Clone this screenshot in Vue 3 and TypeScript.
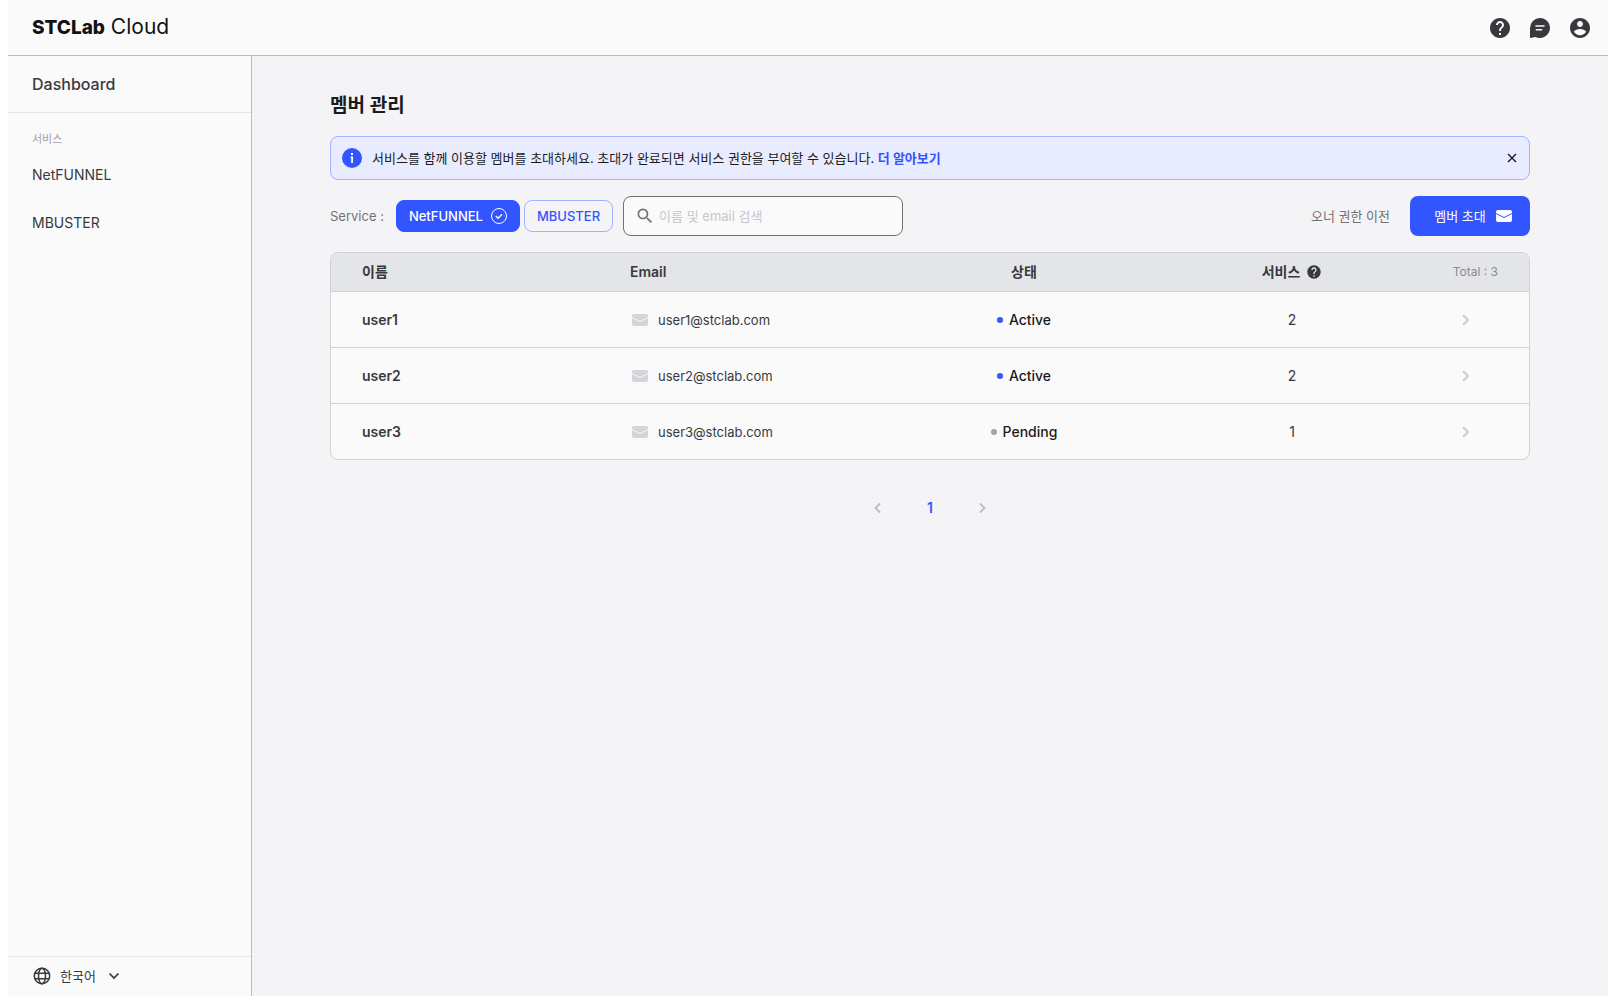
<script setup lang="ts">
import { computed, ref } from 'vue'

interface Member {
  name: string
  email: string
  status: 'Active' | 'Pending'
  services: number
}

const navItems: string[] = ['NetFUNNEL', 'MBUSTER']
const services: string[] = ['NetFUNNEL', 'MBUSTER']
const selected = ref<string>('NetFUNNEL')
const query = ref('')
const bannerOpen = ref(true)
const language = ref('ko')

const members: Member[] = [
  { name: 'user1', email: 'user1@stclab.com', status: 'Active', services: 2 },
  { name: 'user2', email: 'user2@stclab.com', status: 'Active', services: 2 },
  { name: 'user3', email: 'user3@stclab.com', status: 'Pending', services: 1 },
]

const visibleMembers = computed(() =>
  members.filter((m) => m.name.includes(query.value) || m.email.includes(query.value)),
)

const helpPath =
  'M12 2C6.48 2 2 6.48 2 12s4.48 10 10 10 10-4.48 10-10S17.52 2 12 2zm1 17h-2v-2h2v2zm2.07-7.75l-.9.92C13.45 12.9 13 13.5 13 15h-2v-.5c0-1.1.45-2.1 1.17-2.83l1.24-1.26c.37-.36.59-.86.59-1.41 0-1.1-.9-2-2-2s-2 .9-2 2H8c0-2.21 1.79-4 4-4s4 1.79 4 4c0 .88-.36 1.68-.93 2.25z'
const mailPath =
  'M2 0h12a2 2 0 0 1 2 2v.9L8 6.9 0 2.9V2a2 2 0 0 1 2-2zM0 4.1l8 4 8-4V10a2 2 0 0 1-2 2H2a2 2 0 0 1-2-2z'
</script>

<template>
  <div class="app">
    <header class="topbar">
      <a class="logo" href="#"><strong>STCLab</strong> Cloud</a>
      <div class="actions">
        <button type="button" aria-label="도움말">
          <svg width="24" height="24" viewBox="0 0 24 24"><path :d="helpPath" /></svg>
        </button>
        <button type="button" aria-label="문의">
          <svg width="24" height="24" viewBox="0 0 24 24">
            <path
              fill-rule="evenodd"
              d="M12 2a10 10 0 1 1-4.6 18.9L2 22V12A10 10 0 0 1 12 2zM8 9.2a.8.8 0 0 0 0 1.6h8a.8.8 0 0 0 0-1.6zM8.4 13a.8.8 0 0 0 0 1.6h5.2a.8.8 0 0 0 0-1.6z"
            />
          </svg>
        </button>
        <button type="button" aria-label="계정">
          <svg width="24" height="24" viewBox="0 0 24 24">
            <path
              d="M12 2C6.48 2 2 6.48 2 12s4.48 10 10 10 10-4.48 10-10S17.52 2 12 2zm0 3c1.66 0 3 1.34 3 3s-1.34 3-3 3-3-1.34-3-3 1.34-3 3-3zm0 14.2c-2.5 0-4.71-1.28-6-3.22.03-1.99 4-3.08 6-3.08 1.99 0 5.97 1.09 6 3.08-1.29 1.94-3.5 3.22-6 3.22z"
            />
          </svg>
        </button>
      </div>
    </header>

    <div class="body">
      <aside class="sidebar">
        <a class="dashboard" href="#">Dashboard</a>
        <nav class="nav">
          <p class="nav-label">서비스</p>
          <a v-for="item in navItems" :key="item" href="#">{{ item }}</a>
        </nav>
        <label class="language" aria-label="언어">
          <svg width="20" height="20" viewBox="0 0 20 20" fill="none" stroke="currentColor" stroke-width="1.5">
            <circle cx="10" cy="10" r="7.7" />
            <ellipse cx="10" cy="10" rx="3.5" ry="7.7" />
            <path d="M2.8 7.3h14.4M2.8 12.7h14.4" />
          </svg>
          <select v-model="language">
            <option value="ko">한국어</option>
          </select>
          <svg width="12" height="12" viewBox="0 0 12 12" fill="none" stroke="currentColor" stroke-width="1.7">
            <path d="M1.5 3.5 6 8l4.5-4.5" />
          </svg>
        </label>
      </aside>

      <main class="main">
        <div class="content">
          <h1>멤버 관리</h1>

          <section v-if="bannerOpen" class="banner">
            <svg width="20" height="20" viewBox="0 0 20 20">
              <circle cx="10" cy="10" r="10" fill="#3355ff" />
              <path d="M9 5h2v2H9zM8.5 8.5H11V15H9.2V9.7h-.7z" fill="#fff" />
            </svg>
            <p>
              서비스를 함께 이용할 멤버를 초대하세요. 초대가 완료되면 서비스 권한을 부여할 수 있습니다.
              <a href="#">더 알아보기</a>
            </p>
            <button type="button" aria-label="닫기" @click="bannerOpen = false">
              <svg width="10" height="10" viewBox="0 0 10 10" fill="none" stroke="currentColor" stroke-width="1.4">
                <path d="m1 1 8 8M9 1 1 9" />
              </svg>
            </button>
          </section>

          <div class="toolbar">
            <span class="toolbar-label">Service :</span>
            <div class="chips">
              <button
                v-for="s in services"
                :key="s"
                type="button"
                class="chip"
                :class="{ on: s === selected }"
                :aria-pressed="s === selected"
                @click="selected = s"
              >
                {{ s }}
                <svg v-if="s === selected" width="16" height="16" viewBox="0 0 16 16" fill="none" stroke="currentColor">
                  <circle cx="8" cy="8" r="7.5" />
                  <path d="m4.8 8 2.3 2.3 4-4" stroke-width="1.3" />
                </svg>
              </button>
            </div>
            <label class="search" aria-label="멤버 검색">
              <svg width="20" height="20" viewBox="0 0 24 24">
                <path
                  d="M15.5 14h-.79l-.28-.27A6.471 6.471 0 0 0 16 9.5 6.5 6.5 0 1 0 9.5 16c1.61 0 3.09-.59 4.23-1.57l.27.28v.79l5 4.99L20.49 19l-4.99-5zm-6 0C7.01 14 5 11.99 5 9.5S7.01 5 9.5 5 14 7.01 14 9.5 11.99 14 9.5 14z"
                />
              </svg>
              <input v-model="query" type="text" placeholder="이름 및 email 검색" />
            </label>
            <button type="button" class="transfer">오너 권한 이전</button>
            <button type="button" class="invite">
              멤버 초대
              <svg width="16" height="12" viewBox="0 0 16 12"><path :d="mailPath" /></svg>
            </button>
          </div>

          <div class="table-frame">
            <table>
              <colgroup>
                <col class="col-name" />
                <col />
                <col class="col-mid" />
                <col class="col-mid" />
                <col class="col-end" />
              </colgroup>
              <thead>
                <tr>
                  <th class="name">이름</th>
                  <th>Email</th>
                  <th class="center">상태</th>
                  <th>
                    <div class="service-head">
                      서비스
                      <svg width="16" height="16" viewBox="0 0 24 24"><path :d="helpPath" /></svg>
                    </div>
                  </th>
                  <th class="total">Total : {{ members.length }}</th>
                </tr>
              </thead>
              <tbody>
                <tr v-for="m in visibleMembers" :key="m.email">
                  <td class="name">{{ m.name }}</td>
                  <td>
                    <div class="email">
                      <svg width="16" height="12" viewBox="0 0 16 12"><path :d="mailPath" /></svg>
                      {{ m.email }}
                    </div>
                  </td>
                  <td>
                    <div class="status" :class="{ active: m.status === 'Active' }">{{ m.status }}</div>
                  </td>
                  <td class="center">{{ m.services }}</td>
                  <td class="more">
                    <button type="button" :aria-label="m.name + ' 상세'">
                      <svg width="12" height="12" viewBox="0 0 12 12" fill="none" stroke="currentColor" stroke-width="1.8">
                        <path d="m3 1 5 5-5 5" />
                      </svg>
                    </button>
                  </td>
                </tr>
              </tbody>
            </table>
          </div>

          <nav class="pager" aria-label="페이지">
            <button type="button" aria-label="이전">
              <svg width="12" height="12" viewBox="0 0 12 12" fill="none" stroke="currentColor" stroke-width="1.8">
                <path d="M8 1.5 3.5 6 8 10.5" />
              </svg>
            </button>
            <button type="button" class="current" aria-current="page">1</button>
            <button type="button" aria-label="다음">
              <svg width="12" height="12" viewBox="0 0 12 12" fill="none" stroke="currentColor" stroke-width="1.8">
                <path d="M4 1.5 8.5 6 4 10.5" />
              </svg>
            </button>
          </nav>
        </div>
      </main>
    </div>
  </div>
</template>

<style>
body {
  background: #fff;
}
</style>

<style scoped>
.app {
  display: flex;
  flex-direction: column;
  box-sizing: border-box;
  min-height: 100vh;
  padding: 0 0 12px 8px;
  font-family: Inter, 'Noto Sans CJK KR', sans-serif;
  font-size: 13px;
  line-height: 20px;
  color: #38393e;
}
.app * {
  box-sizing: border-box;
}
svg {
  display: block;
  flex: none;
}
svg:not([fill]) {
  fill: currentColor;
}
a {
  color: inherit;
  text-decoration: none;
}
button,
input,
select {
  margin: 0;
  padding: 0;
  border: 0;
  background: none;
  font: inherit;
  color: inherit;
}
button {
  cursor: pointer;
}
.topbar {
  display: flex;
  align-items: center;
  justify-content: space-between;
  height: 56px;
  padding: 0 16px 0 24px;
  background: #fafafa;
  border-bottom: 1px solid #bcbdc2;
}
.logo {
  font-size: 21px;
  line-height: 28px;
  color: #121314;
}
.logo strong {
  font-size: 19px;
  font-weight: 800;
}
.actions {
  display: flex;
  gap: 16px;
}
.body {
  display: flex;
  flex: 1;
}
.sidebar {
  display: flex;
  flex-direction: column;
  flex: none;
  width: 244px;
  background: #fafafa;
  border-right: 1px solid #bcbdc2;
}
.dashboard {
  padding: 18px 24px;
  border-bottom: 1px solid #e2e3ea;
  font-size: 16px;
  font-weight: 500;
}
.nav {
  display: flex;
  flex: 1;
  flex-direction: column;
  padding: 16px 24px;
}
.nav-label {
  margin: 0;
  font-size: 11px;
  color: #a2a3a8;
}
.nav a {
  padding: 14px 0;
  font-size: 14px;
}
.nav-label + a {
  padding-top: 16px;
}
.language {
  display: flex;
  align-items: center;
  height: 40px;
  padding: 0 24px 2px;
  border-top: 1px solid #e2e3ea;
}
.language select {
  margin: 0 12px 0 8px;
  appearance: none;
}
.main {
  flex: 1;
  min-width: 0;
  padding: 32px 24px;
  background: #f4f4f7;
}
.content {
  max-width: 1200px;
  margin: 0 auto;
}
h1 {
  margin: 0;
  padding: 2px 0 14px;
  font-size: 19px;
  line-height: 32px;
  font-weight: 600;
  color: #1a1b1d;
}
.banner {
  display: flex;
  align-items: center;
  gap: 10px;
  height: 44px;
  margin-bottom: 16px;
  padding: 0 11px;
  background: #e9ecfe;
  border: 1px solid #a3b3ff;
  border-radius: 8px;
  color: #1a1b1d;
}
.banner p {
  flex: 1;
  margin: 0;
}
.banner a {
  color: #3355ff;
  font-weight: 700;
}
.banner button {
  padding: 1px;
}
.toolbar {
  display: flex;
  align-items: center;
  margin-bottom: 16px;
}
.toolbar-label {
  margin-right: 12px;
  color: #717277;
}
.chips {
  display: flex;
  gap: 4px;
  margin-right: 10px;
}
.chip {
  display: flex;
  align-items: center;
  gap: 8px;
  height: 32px;
  padding: 0 12px;
  border: 1px solid #a3b3ff;
  border-radius: 8px;
  font-weight: 500;
  color: #3355ff;
}
.chip.on {
  border-color: #3355ff;
  background: #3355ff;
  color: #fff;
}
.search {
  display: flex;
  align-items: center;
  gap: 4px;
  width: 280px;
  height: 40px;
  padding: 0 11px;
  background: #fafafa;
  border: 1px solid #717277;
  border-radius: 8px;
  color: #717277;
}
.search input {
  flex: 1;
  min-width: 0;
  outline: 0;
}
.search input::placeholder {
  color: #c6c7cc;
  opacity: 1;
}
.transfer {
  margin-left: auto;
  margin-right: 20px;
  color: #717277;
}
.invite {
  display: flex;
  align-items: center;
  justify-content: center;
  gap: 10px;
  width: 120px;
  height: 40px;
  padding-left: 6px;
  background: #3355ff;
  border-radius: 8px;
  color: #fff;
}
.table-frame {
  overflow: hidden;
  background: #fafafa;
  border: 1px solid #d1d2d6;
  border-radius: 8px;
}
table {
  width: 100%;
  border-spacing: 0;
  table-layout: fixed;
  font-size: 14px;
}
.col-name {
  width: 299px;
}
.col-mid {
  width: 268px;
}
.col-end {
  width: 103px;
}
th {
  height: 38px;
  padding: 0;
  background: #e4e5e9;
  font-weight: 600;
  text-align: left;
}
td {
  height: 56px;
  padding: 0;
  border-top: 1px solid #d1d2d6;
}
.name {
  padding-left: 31px;
  font-weight: 600;
}
.center {
  text-align: center;
}
.service-head {
  display: flex;
  align-items: center;
  justify-content: center;
  gap: 6px;
}
.total {
  padding-right: 31px;
  font-size: 12px;
  font-weight: 400;
  text-align: right;
  color: #8a8b90;
}
.email {
  display: flex;
  align-items: center;
  gap: 10px;
  padding-left: 2px;
  font-size: 13px;
}
.email svg {
  color: #d3d4da;
}
.status {
  display: flex;
  align-items: center;
  justify-content: center;
  gap: 6px;
  font-weight: 500;
  color: #1a1b1d;
}
.status::before {
  content: '';
  width: 6px;
  height: 6px;
  border-radius: 50%;
  background: #a2a3a8;
}
.status.active::before {
  background: #3355ff;
}
.more {
  padding-left: 34px;
  color: #c9cacf;
}
.more button {
  display: block;
}
.pager {
  display: flex;
  align-items: center;
  justify-content: center;
  gap: 28px;
  margin-top: 36px;
}
.pager button {
  display: flex;
  align-items: center;
  justify-content: center;
  width: 24px;
  height: 24px;
  color: #bcbdc2;
}
.pager .current {
  font-size: 14px;
  font-weight: 600;
  color: #3355ff;
}
</style>
